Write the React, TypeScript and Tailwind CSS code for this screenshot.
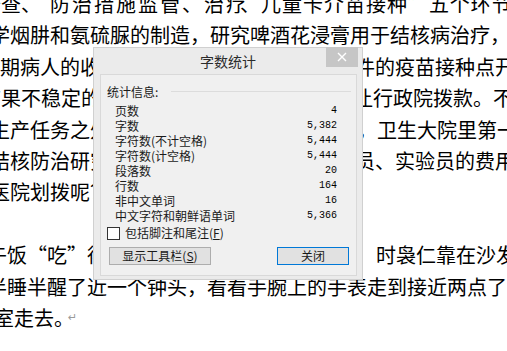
const stats = [
  { label: "页数", value: "4" },
  { label: "字数", value: "5,382" },
  { label: "字符数(不计空格)", value: "5,444" },
  { label: "字符数(计空格)", value: "5,444" },
  { label: "段落数", value: "20" },
  { label: "行数", value: "164" },
  { label: "非中文单词", value: "16" },
  { label: "中文字符和朝鲜语单词", value: "5,366" },
];

function Line({ children, first }: { children?: React.ReactNode; first?: boolean }) {
  return (
    <div
      className={
        first
          ? "flex h-[29.4px] shrink-0 items-end whitespace-nowrap leading-[31.4px]"
          : "flex h-[31.4px] shrink-0 items-center whitespace-nowrap leading-[31.4px]"
      }
    >
      {children}
    </div>
  );
}

function WordCountDialog() {
  return (
    <div className="absolute left-[93px] top-[47px] flex h-[233px] w-[270px] flex-col border border-[#d0d0d0] bg-[#ebebeb] font-['Noto_Sans_CJK_SC',sans-serif] text-[12px] text-[#1a1a1a]">
      <div className="relative flex h-[26px] shrink-0 items-center justify-center text-[14px] text-[#2b2b2b]">
        字数统计
        <div className="absolute -top-px right-[4px] flex h-[20px] w-[32px] items-center justify-center bg-[#c6c6c6]">
          <svg width="10" height="10" viewBox="0 0 10 10">
            <path d="M1 1L9 9M9 1L1 9" stroke="#fff" strokeWidth="1.4" />
          </svg>
        </div>
      </div>
      <div className="mb-[3px] ml-[6px] mr-[5px] flex flex-1 flex-col border border-[#d9d9d9] bg-[#f0f0f0]">
        <div className="flex items-center pl-[6px] pr-[5px] pt-[9px] leading-[15px]">
          <span>统计信息:</span>
          <div className="ml-[13px] flex-1 border-t border-[#dcdcdc]" />
        </div>
        <div className="mt-[4px] flex flex-col pl-[14px] pr-[19px]">
          {stats.map((s) => (
            <div key={s.label} className="flex h-[15px] items-center justify-between leading-[15px]">
              <span>{s.label}</span>
              <span className="font-['Liberation_Mono',monospace] text-[10px] text-black">{s.value}</span>
            </div>
          ))}
        </div>
        <div className="mt-[3px] flex h-[14px] items-center gap-[5px] pl-[6px]">
          <div className="h-[13px] w-[13px] border border-[#333] bg-white" />
          <span>
            包括脚注和尾注(<span className="underline">F</span>)
          </span>
        </div>
        <div className="mt-[7px] flex justify-between pl-[8px] pr-[7px]">
          <div className="flex h-[18px] w-[102px] items-center justify-center border border-[#adadad] bg-[#e1e1e1]">
            显示工具栏(<span className="underline">S</span>)
          </div>
          <div className="flex h-[18px] w-[72px] items-center justify-center border border-[#0078d7] bg-[#e1e1e1]">
            关闭
          </div>
        </div>
      </div>
    </div>
  );
}

export default function App() {
  return (
    <div className="relative h-[351px] w-[507px] overflow-hidden bg-white">
      <div className="-mt-[10px] flex flex-col font-['Noto_Sans_CJK_SC',sans-serif] text-[20px] text-black">
        <Line first>
          <span className="-ml-[19px] shrink-0">普查、</span>
          <span className="ml-[9px] shrink-0 tracking-[2px]">防治措施监管、治疗</span>
          <span className="-ml-[8px] shrink-0 tracking-[1px]">、儿童卡介苗接种”</span>
          <span className="shrink-0 tracking-[0.7px]">五个环节</span>
        </Line>
        <Line>
          <span className="-ml-[10px] shrink-0">学烟肼和氨硫脲的制造，研究啤酒花浸膏用于结核病治疗，</span>
        </Line>
        <Line>
          <span className="-ml-[20px] shrink-0">早期病人的收</span>
          <span className="ml-[255px] shrink-0">件的疫苗接种点开</span>
        </Line>
        <Line>
          <span className="-ml-[19px] shrink-0">结果不稳定的</span>
          <span className="ml-[252px] shrink-0">让行政院拨款。不</span>
        </Line>
        <Line>
          <span className="-ml-[10px] shrink-0">生产任务之外</span>
          <span className="ml-[247px] shrink-0">，卫生大院里第一</span>
        </Line>
        <Line>
          <span className="-ml-[10px] shrink-0">结核防治研究</span>
          <span className="ml-[245px] shrink-0">员、实验员的费用</span>
        </Line>
        <Line>
          <span className="-ml-[10px] shrink-0">医院划拨呢？</span>
        </Line>
        <Line />
        <Line>
          <span className="-ml-[13px] w-[120px] shrink-0">午饭“吃”得香</span>
          <span className="ml-[269px] shrink-0">时袅仁靠在沙发</span>
        </Line>
        <Line>
          <span className="-ml-[13px] shrink-0">半睡半醒了近一个钟头，看看手腕上的手表走到接近两点了</span>
        </Line>
        <Line>
          <span className="-ml-[6px] shrink-0">室走去。</span>
          <span className="-ml-[6px] shrink-0 font-['DejaVu_Sans',sans-serif] text-[11px] text-[#9a9a9a]">↵</span>
        </Line>
      </div>
      <WordCountDialog />
    </div>
  );
}
